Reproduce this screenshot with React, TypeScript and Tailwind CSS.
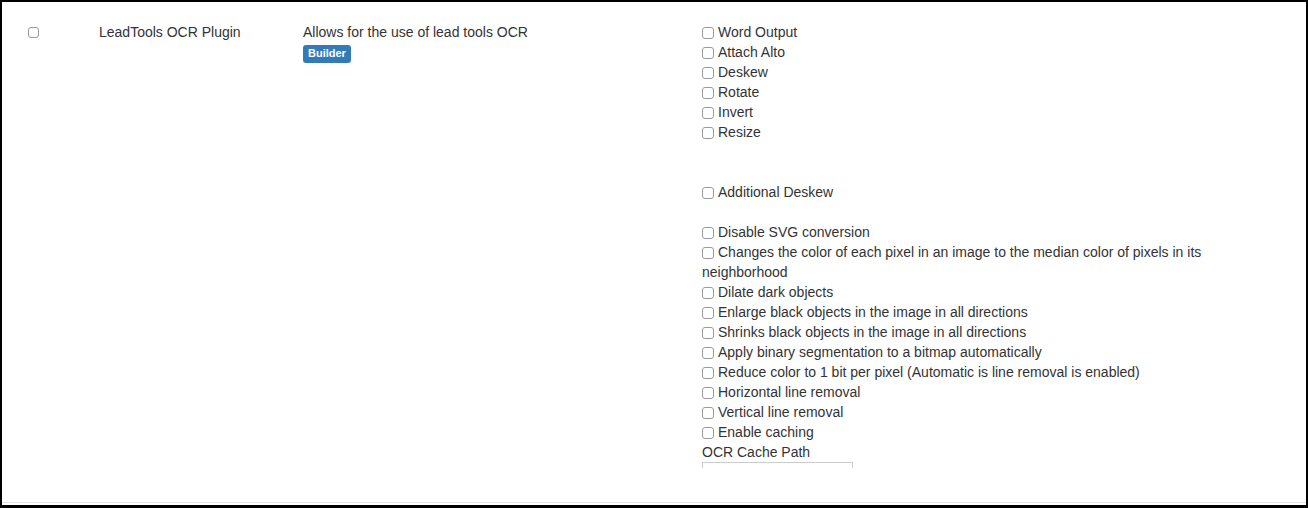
const optionsTop = ["Word Output", "Attach Alto", "Deskew", "Rotate", "Invert", "Resize"];

const optionsBottom = [
  "Disable SVG conversion",
  "Changes the color of each pixel in an image to the median color of pixels in its neighborhood",
  "Dilate dark objects",
  "Enlarge black objects in the image in all directions",
  "Shrinks black objects in the image in all directions",
  "Apply binary segmentation to a bitmap automatically",
  "Reduce color to 1 bit per pixel (Automatic is line removal is enabled)",
  "Horizontal line removal",
  "Vertical line removal",
  "Enable caching",
];

function Box() {
  return (
    <span className="mr-[4px] inline-block h-[12px] w-[12px] rounded-[3px] border border-[#9a9a9a] bg-white align-[-2px]" />
  );
}

function Option({ label }: { label: string }) {
  return (
    <label className="block">
      <Box />
      {label}
    </label>
  );
}

export default function App() {
  return (
    <div
      className="h-[508px] w-[1308px] border-b-[3px] border-l-2 border-r-2 border-t-2 border-black bg-white text-[14px] leading-[20px] text-[#333]"
      style={{ fontFamily: '"Liberation Sans", Arial, sans-serif' }}
    >
      <div className="flex h-[501px] border-b border-[#e3e3e3]">
        <div className="w-[97px] shrink-0 pl-[26px] pt-[25px]">
          <span className="block h-[11px] w-[11px] rounded-[3px] border border-[#9a9a9a]" />
        </div>
        <div className="w-[204px] shrink-0 pt-[20px]">LeadTools OCR Plugin</div>
        <div className="w-[399px] shrink-0 pt-[20px]">
          <div>Allows for the use of lead tools OCR</div>
          <span className="mt-px inline-flex h-[18px] items-center rounded-[3px] bg-[#337ab7] px-[5px] text-[11px] font-bold leading-none text-white">
            Builder
          </span>
        </div>
        <div className="min-w-0 flex-1 pr-[96px] pt-[20px]">
          <div className="h-[446px] overflow-hidden">
            {optionsTop.map((o) => (
              <Option key={o} label={o} />
            ))}
            <div className="h-[40px]" />
            <Option label="Additional Deskew" />
            <div className="h-[20px]" />
            {optionsBottom.map((o) => (
              <Option key={o} label={o} />
            ))}
            <div>OCR Cache Path</div>
            <div className="h-[34px] w-[151px] border border-[#ccc]" />
          </div>
        </div>
      </div>
    </div>
  );
}
